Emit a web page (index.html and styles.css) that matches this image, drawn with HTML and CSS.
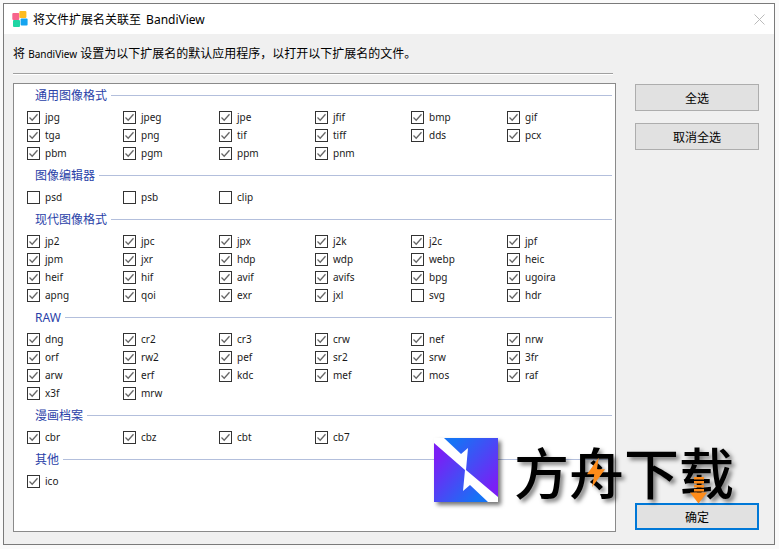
FILE: index.html
```html
<!DOCTYPE html>
<html lang="zh-CN">
<head>
<meta charset="utf-8">
<title>将文件扩展名关联至 BandiView</title>
<link rel="stylesheet" href="styles.css">
</head>
<body>
<svg class="defs" width="0" height="0"><defs>
<symbol id="tick" viewBox="0 0 13 13"><path d="M2.5 6.5 5.2 9.2 10.5 3.2" fill="none" stroke="#666" stroke-width="1.3"/></symbol>
<linearGradient id="gl" x1="0" y1="0.3" x2="0.75" y2="1"><stop offset="0" stop-color="#7a1ff5"/><stop offset="1" stop-color="#1673f5"/></linearGradient>
<linearGradient id="gr" x1="0.25" y1="0" x2="1" y2="0.75"><stop offset="0" stop-color="#1673f5"/><stop offset="1" stop-color="#7a1ff5"/></linearGradient>
</defs></svg>
<div class="window">
  <header class="titlebar">
    <svg class="appicon" width="16" height="16" viewBox="0 0 16 16">
      <rect x="0.3" y="2" width="7" height="7" rx="1" fill="#f7648c"/>
      <rect x="7.4" y="0" width="7" height="7" rx="1" fill="#fdbb1e"/>
      <rect x="1" y="9" width="7" height="7" rx="1" fill="#1fd6a4"/>
      <rect x="8.6" y="7.6" width="7" height="7" rx="1" fill="#14a4f0"/>
    </svg>
    <span class="title">将文件扩展名关联至 BandiView</span>
    <svg class="close" width="11" height="11" viewBox="0 0 11 11"><path d="M0.5 0.5 10.5 10.5M10.5 0.5 0.5 10.5" stroke="#bbb" fill="none"/></svg>
  </header>
  <div class="content">
    <p class="intro">将 <span class="small">BandiView</span> 设置为以下扩展名的默认应用程序，以打开以下扩展名的文件。</p>
    <div class="sep"></div>
    <div class="columns">
      <main class="panel">
        <section class="group">
          <h2 class="head"><span>通用图像格式</span></h2>
          <div class="grid">
            <label class="item"><span class="box"><svg><use href="#tick"/></svg></span>jpg</label>
            <label class="item"><span class="box"><svg><use href="#tick"/></svg></span>jpeg</label>
            <label class="item"><span class="box"><svg><use href="#tick"/></svg></span>jpe</label>
            <label class="item"><span class="box"><svg><use href="#tick"/></svg></span>jfif</label>
            <label class="item"><span class="box"><svg><use href="#tick"/></svg></span>bmp</label>
            <label class="item"><span class="box"><svg><use href="#tick"/></svg></span>gif</label>
            <label class="item"><span class="box"><svg><use href="#tick"/></svg></span>tga</label>
            <label class="item"><span class="box"><svg><use href="#tick"/></svg></span>png</label>
            <label class="item"><span class="box"><svg><use href="#tick"/></svg></span>tif</label>
            <label class="item"><span class="box"><svg><use href="#tick"/></svg></span>tiff</label>
            <label class="item"><span class="box"><svg><use href="#tick"/></svg></span>dds</label>
            <label class="item"><span class="box"><svg><use href="#tick"/></svg></span>pcx</label>
            <label class="item"><span class="box"><svg><use href="#tick"/></svg></span>pbm</label>
            <label class="item"><span class="box"><svg><use href="#tick"/></svg></span>pgm</label>
            <label class="item"><span class="box"><svg><use href="#tick"/></svg></span>ppm</label>
            <label class="item"><span class="box"><svg><use href="#tick"/></svg></span>pnm</label>
          </div>
        </section>
        <section class="group">
          <h2 class="head"><span>图像编辑器</span></h2>
          <div class="grid">
            <label class="item"><span class="box"></span>psd</label>
            <label class="item"><span class="box"></span>psb</label>
            <label class="item"><span class="box"></span>clip</label>
          </div>
        </section>
        <section class="group">
          <h2 class="head"><span>现代图像格式</span></h2>
          <div class="grid">
            <label class="item"><span class="box"><svg><use href="#tick"/></svg></span>jp2</label>
            <label class="item"><span class="box"><svg><use href="#tick"/></svg></span>jpc</label>
            <label class="item"><span class="box"><svg><use href="#tick"/></svg></span>jpx</label>
            <label class="item"><span class="box"><svg><use href="#tick"/></svg></span>j2k</label>
            <label class="item"><span class="box"><svg><use href="#tick"/></svg></span>j2c</label>
            <label class="item"><span class="box"><svg><use href="#tick"/></svg></span>jpf</label>
            <label class="item"><span class="box"><svg><use href="#tick"/></svg></span>jpm</label>
            <label class="item"><span class="box"><svg><use href="#tick"/></svg></span>jxr</label>
            <label class="item"><span class="box"><svg><use href="#tick"/></svg></span>hdp</label>
            <label class="item"><span class="box"><svg><use href="#tick"/></svg></span>wdp</label>
            <label class="item"><span class="box"><svg><use href="#tick"/></svg></span>webp</label>
            <label class="item"><span class="box"><svg><use href="#tick"/></svg></span>heic</label>
            <label class="item"><span class="box"><svg><use href="#tick"/></svg></span>heif</label>
            <label class="item"><span class="box"><svg><use href="#tick"/></svg></span>hif</label>
            <label class="item"><span class="box"><svg><use href="#tick"/></svg></span>avif</label>
            <label class="item"><span class="box"><svg><use href="#tick"/></svg></span>avifs</label>
            <label class="item"><span class="box"><svg><use href="#tick"/></svg></span>bpg</label>
            <label class="item"><span class="box"><svg><use href="#tick"/></svg></span>ugoira</label>
            <label class="item"><span class="box"><svg><use href="#tick"/></svg></span>apng</label>
            <label class="item"><span class="box"><svg><use href="#tick"/></svg></span>qoi</label>
            <label class="item"><span class="box"><svg><use href="#tick"/></svg></span>exr</label>
            <label class="item"><span class="box"><svg><use href="#tick"/></svg></span>jxl</label>
            <label class="item"><span class="box"></span>svg</label>
            <label class="item"><span class="box"><svg><use href="#tick"/></svg></span>hdr</label>
          </div>
        </section>
        <section class="group">
          <h2 class="head"><span>RAW</span></h2>
          <div class="grid">
            <label class="item"><span class="box"><svg><use href="#tick"/></svg></span>dng</label>
            <label class="item"><span class="box"><svg><use href="#tick"/></svg></span>cr2</label>
            <label class="item"><span class="box"><svg><use href="#tick"/></svg></span>cr3</label>
            <label class="item"><span class="box"><svg><use href="#tick"/></svg></span>crw</label>
            <label class="item"><span class="box"><svg><use href="#tick"/></svg></span>nef</label>
            <label class="item"><span class="box"><svg><use href="#tick"/></svg></span>nrw</label>
            <label class="item"><span class="box"><svg><use href="#tick"/></svg></span>orf</label>
            <label class="item"><span class="box"><svg><use href="#tick"/></svg></span>rw2</label>
            <label class="item"><span class="box"><svg><use href="#tick"/></svg></span>pef</label>
            <label class="item"><span class="box"><svg><use href="#tick"/></svg></span>sr2</label>
            <label class="item"><span class="box"><svg><use href="#tick"/></svg></span>srw</label>
            <label class="item"><span class="box"><svg><use href="#tick"/></svg></span>3fr</label>
            <label class="item"><span class="box"><svg><use href="#tick"/></svg></span>arw</label>
            <label class="item"><span class="box"><svg><use href="#tick"/></svg></span>erf</label>
            <label class="item"><span class="box"><svg><use href="#tick"/></svg></span>kdc</label>
            <label class="item"><span class="box"><svg><use href="#tick"/></svg></span>mef</label>
            <label class="item"><span class="box"><svg><use href="#tick"/></svg></span>mos</label>
            <label class="item"><span class="box"><svg><use href="#tick"/></svg></span>raf</label>
            <label class="item"><span class="box"><svg><use href="#tick"/></svg></span>x3f</label>
            <label class="item"><span class="box"><svg><use href="#tick"/></svg></span>mrw</label>
          </div>
        </section>
        <section class="group">
          <h2 class="head"><span>漫画档案</span></h2>
          <div class="grid">
            <label class="item"><span class="box"><svg><use href="#tick"/></svg></span>cbr</label>
            <label class="item"><span class="box"><svg><use href="#tick"/></svg></span>cbz</label>
            <label class="item"><span class="box"><svg><use href="#tick"/></svg></span>cbt</label>
            <label class="item"><span class="box"><svg><use href="#tick"/></svg></span>cb7</label>
          </div>
        </section>
        <section class="group">
          <h2 class="head"><span>其他</span></h2>
          <div class="grid">
            <label class="item"><span class="box"><svg><use href="#tick"/></svg></span>ico</label>
          </div>
        </section>
      </main>
      <aside class="actions">
        <button class="btn">全选</button>
        <button class="btn">取消全选</button>
        <button class="btn primary">确定</button>
      </aside>
    </div>
  </div>
  <div class="watermark">
    <svg class="logo" width="64" height="64" viewBox="0 0 64 64">
      <polygon points="0,0 64,0 64,64 0,64" fill="#fff"/>
      <polygon points="0,5 31,32 29,53 36,47 54,64 0,64" fill="url(#gl)"/>
      <polygon points="10,0 27,16 34,10 32,32 64,59 64,0" fill="url(#gr)"/>
    </svg>
    <span class="brand">方舟下载</span>
    <svg class="bolt" width="20" height="31" viewBox="0 0 20 31"><polygon points="12.7,0.7 1,17.3 8.3,17.3 6,30.3 19,12.3 11,12.3" fill="#ff8c1a"/></svg>
    <svg class="arrow" width="18" height="27" viewBox="0 0 18 27"><path d="M4 0h10v2.6H4zM4 4h10v2.6H4zM4 8h10v2.6H4zM4 12h10v2.6H4z" fill="#ff8c1a"/><polygon points="0,15.5 17,15.5 8.5,26.5" fill="#ff8c1a"/></svg>
  </div>
</div>
</body>
</html>
```

FILE: styles.css
```css
* { box-sizing: border-box; }
html, body { margin: 0; padding: 0; }
body {
  width: 779px;
  height: 549px;
  padding: 3px 0 0 3px;
  background: #fafafa;
  font-family: "Noto Sans", "Noto Sans CJK SC", sans-serif;
  font-size: 12px;
  color: #000;
  overflow: hidden;
}
.defs { position: absolute; }
.window {
  position: relative;
  width: 772px;
  height: 542px;
  border: 1px solid #7a7a7a;
  background: #f0f0f0;
  display: flex;
  flex-direction: column;
}
.titlebar {
  height: 30px;
  flex: none;
  background: #fff;
  display: flex;
  align-items: center;
  padding: 0 9px 0 8px;
}
.appicon { flex: none; }
.title { margin-left: 5px; font-size: 12px; flex: 1; word-spacing: 2px; }
.close { flex: none; }
.content {
  flex: 1;
  display: flex;
  flex-direction: column;
  padding: 0 14px 0 9px;
  min-height: 0;
}
.intro {
  margin: 0;
  height: 39px;
  line-height: 39px;
  font-size: 12px;
  white-space: nowrap;
}
.small { font-size: 10px; }
.sep {
  width: 600px;
  height: 2px;
  border-top: 1px solid #a0a0a0;
  border-bottom: 1px solid #fff;
  flex: none;
}
.columns {
  flex: 1;
  display: flex;
  gap: 19px;
  margin-top: 8px;
  min-height: 0;
  padding-bottom: 12px;
}
.panel {
  width: 603px;
  flex: none;
  background: #fff;
  border: 1px solid #8a8a8a;
  padding: 2px 3px 0 0;
}
.group { margin-bottom: 4px; }
.head {
  margin: 0 0 4px 21px;
  height: 18px;
  display: flex;
  align-items: center;
  gap: 4px;
  font-size: 12px;
  font-weight: 400;
  color: #2a3fa8;
  white-space: nowrap;
}
.head::after {
  content: "";
  flex: 1;
  height: 1px;
  background: #b3bfdc;
}
.grid {
  display: grid;
  grid-template-columns: repeat(6, 96px);
  padding-left: 13px;
}
.item {
  height: 18px;
  display: flex;
  align-items: center;
  gap: 5px;
  font-size: 10px;
  color: #1a1a1a;
}
.box {
  width: 13px;
  height: 13px;
  flex: none;
  border: 1px solid #333;
  background: #fff;
  position: relative;
}
.box svg {
  position: absolute;
  left: -1px;
  top: -1px;
  width: 13px;
  height: 13px;
}
.actions {
  width: 124px;
  flex: none;
  display: flex;
  flex-direction: column;
  gap: 12px;
  padding: 1px 0 2px;
}
.btn {
  height: 27px;
  flex: none;
  background: #e1e1e1;
  border: 1px solid #adadad;
  font: inherit;
  font-size: 12px;
  color: #000;
  padding: 0;
}
.primary {
  margin-top: auto;
  border: 2px solid #0078d7;
}
.watermark {
  position: absolute;
  left: 430px;
  top: 434px;
  display: flex;
  align-items: flex-start;
}
.logo {
  flex: none;
  filter: drop-shadow(3px 3px 2px rgba(0, 0, 0, 0.55));
}
.brand {
  margin-left: 16px;
  margin-top: -7px;
  font-family: "Noto Sans CJK SC", sans-serif;
  font-size: 55px;
  font-weight: 500;
  line-height: 78px;
  color: #000;
  text-shadow: 3px 3px 4px rgba(0, 0, 0, 0.5);
  white-space: nowrap;
}
.bolt { position: absolute; left: 152px; top: 19px; }
.arrow { position: absolute; left: 256px; top: 39px; }
```
